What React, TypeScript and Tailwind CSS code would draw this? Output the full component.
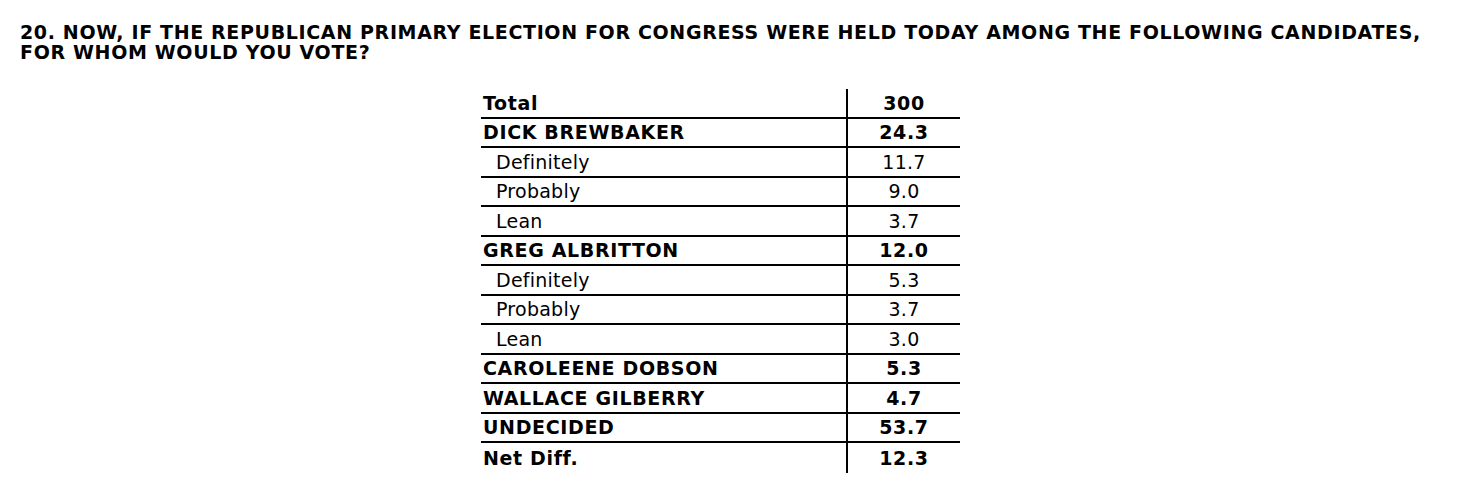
const rows: { label: string; value: string; bold: boolean; indent?: boolean }[] = [
  { label: 'Total', value: '300', bold: true },
  { label: 'DICK BREWBAKER', value: '24.3', bold: true },
  { label: 'Definitely', value: '11.7', bold: false, indent: true },
  { label: 'Probably', value: '9.0', bold: false, indent: true },
  { label: 'Lean', value: '3.7', bold: false, indent: true },
  { label: 'GREG ALBRITTON', value: '12.0', bold: true },
  { label: 'Definitely', value: '5.3', bold: false, indent: true },
  { label: 'Probably', value: '3.7', bold: false, indent: true },
  { label: 'Lean', value: '3.0', bold: false, indent: true },
  { label: 'CAROLEENE DOBSON', value: '5.3', bold: true },
  { label: 'WALLACE GILBERRY', value: '4.7', bold: true },
  { label: 'UNDECIDED', value: '53.7', bold: true },
  { label: 'Net Diff.', value: '12.3', bold: true },
];

export default function App() {
  return (
    <div className="w-[1458px] h-[490px] bg-white text-black font-['DejaVu_Sans',Verdana,sans-serif] overflow-hidden">
      <div className="pl-5 pt-[22px]">
        <h1 className="text-[19px] leading-[20px] font-bold tracking-[0.65px]">
          20. NOW, IF THE REPUBLICAN PRIMARY ELECTION FOR CONGRESS WERE HELD TODAY AMONG THE FOLLOWING CANDIDATES,
          <br />
          FOR WHOM WOULD YOU VOTE?
        </h1>
      </div>

      <div className="ml-[481px] mt-[27px] w-[479px] text-[19px]">
        {rows.map((row, i) => (
          <div
            key={i}
            className={`flex h-[29.5px] ${i < rows.length - 1 ? 'border-b-2 border-black' : ''}`}
          >
            <div
              className={`flex-1 flex items-center ${row.indent ? 'pl-[15px]' : 'pl-[2px]'} ${row.bold ? 'font-bold tracking-[0.65px]' : 'tracking-[0.25px]'}`}
            >
              {row.label}
            </div>
            <div
              className={`w-[114px] border-l-2 border-black flex items-center justify-center ${row.bold ? 'font-bold tracking-[0.65px]' : 'tracking-[0.25px]'}`}
            >
              {row.value}
            </div>
          </div>
        ))}
      </div>
    </div>
  );
}
